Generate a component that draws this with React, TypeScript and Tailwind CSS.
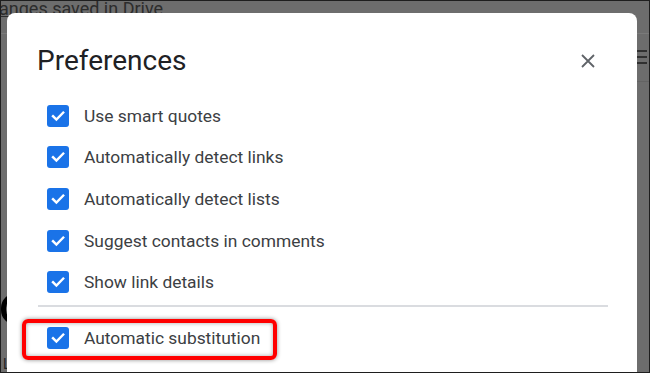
const options = [
  'Use smart quotes',
  'Automatically detect links',
  'Automatically detect lists',
  'Suggest contacts in comments',
  'Show link details',
]

function Check() {
  return (
    <span className="flex h-[22px] w-[22px] shrink-0 items-center justify-center rounded-[3px] bg-[#1a73e8]">
      <svg width="22" height="22" viewBox="0 0 22 22" fill="none">
        <path d="M6 11.2l3.4 3.4L16.2 7.6" stroke="#fff" strokeWidth="2.4" strokeLinecap="square" />
      </svg>
    </span>
  )
}

function Row({ label }: { label: string }) {
  return (
    <div className="flex h-[41.6px] items-center gap-[15px] pl-[40px]">
      <Check />
      <span className="text-[17.4px] text-[#3c4043]">{label}</span>
    </div>
  )
}

export default function App() {
  return (
    <div
      className="relative h-[373px] w-[650px] overflow-hidden border border-[#1e1e1e] bg-[#6d6d6d]"
      style={{ fontFamily: 'Roboto, "Liberation Sans", sans-serif' }}
    >
      {/* page behind the overlay */}
      <div className="absolute inset-0">
        <div className="absolute left-[-2px] top-[-3px] text-[18px] leading-[22px] text-[#2c2c2c]">
          <span className="underline">a</span>nges saved in Drive
        </div>
        <div className="absolute left-0 right-0 top-[32px] h-px bg-[#7a7a7a]" />
        <div className="absolute right-0 top-[80px] h-px w-[14px] bg-[#636363]" />
        <div className="absolute right-[2px] top-[49px] flex w-[10px] flex-col gap-[4px]">
          <span className="h-[2px] bg-[#303030]" />
          <span className="h-[2px] bg-[#303030]" />
          <span className="h-[2px] bg-[#303030]" />
        </div>
        <div className="absolute left-0 top-[292px] h-[32px] w-[30px] rounded-full border-[5px] border-black" />
        <div className="absolute bottom-[0px] left-[2px] text-[14px] leading-[16px] text-[#222]">L</div>
      </div>

      {/* dialog */}
      <div className="relative ml-[6px] mt-[12px] h-[400px] w-[630px] rounded-[8px] bg-white">
        <div className="flex items-center justify-between pl-[30px] pr-[42px] pt-[30px]">
          <h1 className="text-[28px] leading-[36px] text-[#202124]">Preferences</h1>
          <svg width="14" height="14" viewBox="0 0 14 14">
            <path d="M1 1L13 13M13 1L1 13" stroke="#5f6368" strokeWidth="1.8" />
          </svg>
        </div>

        <div className="mt-[16px]">
          {options.map((o) => (
            <Row key={o} label={o} />
          ))}
        </div>

        <div className="ml-[31px] mt-[2px] h-[2px] w-[570px] bg-[#dadce0]" />

        <div className="relative mt-[10px]">
          <Row label="Automatic substitution" />
          <div className="absolute left-[15px] top-[2px] h-[41px] w-[255px] rounded-[6px] border-[4px] border-[#ff0000] shadow-[0_0_4px_rgba(0,0,0,0.45),inset_0_0_4px_rgba(0,0,0,0.35)]" />
        </div>
      </div>
    </div>
  )
}
